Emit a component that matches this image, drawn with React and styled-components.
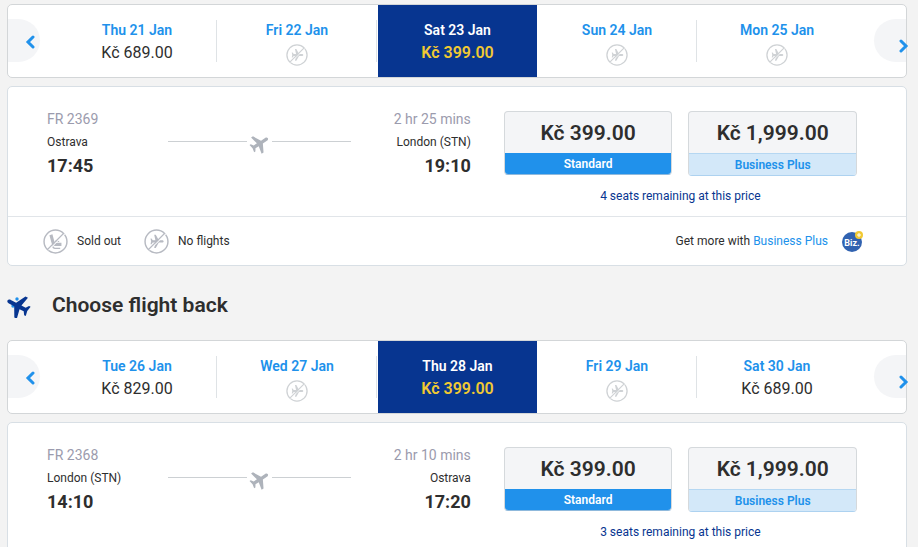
import React, { useState } from "react";
import styled, { createGlobalStyle } from "styled-components";

const GlobalStyle = createGlobalStyle`
  * {
    box-sizing: border-box;
  }
  body {
    margin: 0;
    background: #f3f3f3;
    color: #2e2e2e;
    font-family: Roboto, "Liberation Sans", sans-serif;
    font-size: 12px;
    line-height: 16px;
  }
  button {
    font-family: inherit;
    cursor: pointer;
  }
`;

const Page = styled.main`
  padding: 4px 11px 0 7px;
`;

const Card = styled.section`
  background: #fff;
  border: 1px solid ${(props) => (props.$soft ? "#d8dfe5" : "#d3d6d8")};
  border-radius: 5px;
  margin-bottom: 8px;
`;

const DateBar = styled(Card)`
  display: grid;
  grid-template-columns: 49px repeat(5, 1fr) 49px;
  height: 74px;
`;

const Arrow = styled.button`
  display: flex;
  justify-content: flex-end;
  width: 32px;
  height: 43px;
  margin-top: 14px;
  padding: ${(props) => (props.$next ? "20px 0 0" : "16px 5px 0")};
  border: 0;
  border-radius: ${(props) => (props.$next ? "22px 0 0 22px" : "0 22px 22px 0")};
  justify-self: ${(props) => (props.$next ? "end" : "start")};
  background: #f4f5f7;

  svg {
    flex: none;
    margin-right: ${(props) => (props.$next ? "-3px" : "0")};
  }
`;

const Day = styled.button`
  display: flex;
  flex-direction: column;
  align-items: center;
  margin-left: ${(props) => (props.$active ? "1px" : "0")};
  padding: 16px 0 0;
  border: 0;
  background: ${(props) => (props.$active ? "#073590" : "none")};
  background-image: ${(props) =>
    props.$line ? "linear-gradient(#dfe3e6, #dfe3e6)" : "none"};
  background-size: 1px 42px;
  background-position: right 15px;
  background-repeat: ${(props) => (props.$line ? "no-repeat" : "repeat")};
  color: ${(props) => (props.$active ? "#fff" : "#2091eb")};
  font-size: 14px;
  font-weight: 600;
  line-height: 18px;
`;

const DayPrice = styled.span`
  margin-top: 4px;
  color: ${(props) => (props.$active ? "#f1c933" : "#2e2e2e")};
  font-size: 16px;
  font-weight: ${(props) => (props.$active ? 600 : 400)};
  line-height: 20px;
`;

const DayIcon = styled.span`
  height: 22px;
  margin-top: 5px;
`;

const FlightRow = styled.div`
  display: grid;
  grid-template-columns: 6fr 5fr;
  column-gap: 33px;
  padding: 24px 49px 12px 39px;
`;

const Route = styled.div`
  display: grid;
  grid-template-columns: 121px 1fr 120px;
  align-items: start;
`;

const Stop = styled.div`
  display: flex;
  flex-direction: column;
  text-align: ${(props) => (props.$right ? "right" : "left")};
`;

const Muted = styled.span`
  color: #9b9bad;
  font-size: 14px;
  line-height: 16px;
`;

const City = styled.span`
  margin-top: 7px;
`;

const Time = styled.strong`
  margin-top: 6px;
  font-size: 18px;
  font-weight: 700;
  line-height: 20px;
`;

const PlaneLine = styled.div`
  display: flex;
  align-items: center;
  gap: 2px;
  margin-top: 18px;
  color: #aeb3bb;

  &::before,
  &::after {
    content: "";
    flex: 1;
    height: 1px;
    background: #ccd0d3;
  }

  svg {
    overflow: visible;
  }
`;

const Fares = styled.div`
  display: grid;
  grid-template-columns: 1fr 1fr;
  column-gap: 16px;
  align-items: start;
`;

const FareButton = styled.button`
  display: block;
  padding: 0;
  overflow: hidden;
  border: 1px solid #d5d9dc;
  border-bottom-color: ${(props) => (props.$plus ? "#add2f0" : "#8fb9dc")};
  border-radius: 4px;
  background: #f4f5f7;
  color: #2e2e2e;
`;

const FarePrice = styled.span`
  display: block;
  padding-top: 1px;
  font-size: 21px;
  font-weight: 600;
  line-height: 40px;
`;

const FareName = styled.span`
  display: block;
  padding-top: 1px;
  border-top: ${(props) => (props.$plus ? "1px solid #b5d7f2" : "0")};
  background: ${(props) => (props.$plus ? "#d3e8f9" : "#2091eb")};
  color: ${(props) => (props.$plus ? "#2091eb" : "#fff")};
  font-size: 12px;
  font-weight: 600;
  line-height: 20px;
`;

const Seats = styled.p`
  grid-column: 1 / -1;
  margin: 12px 0 0;
  color: #073590;
  text-align: center;
`;

const Legend = styled.footer`
  display: flex;
  align-items: center;
  height: 49px;
  padding: 0 43px 0 35px;
  border-top: 1px solid #e1e5e9;
`;

const LegendItem = styled.span`
  display: flex;
  align-items: center;
  gap: 9px;
  margin-right: 23px;
`;

const More = styled.span`
  display: flex;
  align-items: center;
  gap: 14px;
  margin-left: auto;

  a {
    color: #2091eb;
    text-decoration: none;
  }
`;

const Heading = styled.h2`
  display: flex;
  align-items: center;
  gap: 20px;
  margin: 26px 0 22px;
  font-size: 21px;
  font-weight: 600;
  line-height: 26px;
`;

const Chevron = ({ next }) => (
  <svg width="10" height="14" viewBox="0 0 10 14" aria-hidden="true">
    <path
      d={next ? "M2 2l5 5-5 5" : "M8 2L3 7l5 5"}
      fill="none"
      stroke="#2091eb"
      strokeWidth="3"
      strokeLinecap="round"
    />
  </svg>
);

// plane in a 24x24 box, nose to the right
const planePath =
  "M23 12c0 1.100-1.200 1.900-2.500 1.900H15L10 23H7.400l2-9.100H5L3 16.800H1.300L2.300 12 1.300 7.200H3l2 2.900h4.400L7.400 1H10l5 9.100h5.500c1.300 0 2.500.8 2.500 1.900z";

const NoFlightIcon = ({ size, color }) => (
  <svg width={size} height={size} viewBox="0 0 24 24" fill="none" aria-hidden="true">
    <circle cx="12" cy="12" r="11" stroke={color} strokeWidth="1.4" />
    <path d={planePath} fill={color} transform="translate(5.5 5) scale(.58)" />
    <path d="M5.200 20.300L20.800 4.700" stroke="#fff" strokeWidth="1" />
    <path d="M4.200 19.800L19.800 4.200" stroke={color} strokeWidth="1.300" />
  </svg>
);

const SoldOutIcon = ({ size, color }) => (
  <svg width={size} height={size} viewBox="0 0 24 24" fill="none" aria-hidden="true">
    <circle cx="12" cy="12" r="11" stroke={color} strokeWidth="1.4" />
    <path d="M7.600 5.500l2 7.300c.3 1.200 1 2 2.200 2h5.900" stroke={color} strokeWidth="3" />
    <path d="M11.500 11.800h4M9 15.500c.2 1.700 1 3 2.500 3h5" stroke={color} strokeWidth="1.200" />
    <path d="M5.200 20.300L20.800 4.700" stroke="#fff" strokeWidth="1" />
    <path d="M4.200 19.800L19.800 4.200" stroke={color} strokeWidth="1.300" />
  </svg>
);

const RoutePlane = () => (
  <svg width="21" height="24" viewBox="0 0 21 24" aria-hidden="true">
    <path
      d={planePath}
      fill="currentColor"
      transform="translate(10 15) rotate(-33) scale(.88) translate(-11 -12)"
    />
  </svg>
);

const BackPlane = () => (
  <svg width="25" height="26" viewBox="0 0 25 26" aria-hidden="true">
    <g fill="#2091eb">
      <circle cx="10" cy="7" r="1.700" />
      <circle cx="6" cy="14" r="1.700" />
    </g>
    <path
      d={planePath}
      fill="#073590"
      transform="translate(11 14) rotate(208) scale(1.080) translate(-12 -12)"
    />
  </svg>
);

const BizIcon = () => (
  <svg width="21" height="22" viewBox="0 0 21 22" aria-hidden="true">
    <circle cx="10" cy="12" r="10" fill="#3162b0" />
    <text
      x="10"
      y="16"
      textAnchor="middle"
      fill="#fff"
      fontFamily="'Liberation Sans Narrow', Roboto, sans-serif"
      fontSize="9"
      fontWeight="700"
    >
      Biz.
    </text>
    <circle cx="17" cy="5" r="4" fill="#f1c933" />
    <path d="M17 3v4M15 5h4" stroke="#fff" strokeWidth="1" />
  </svg>
);

const outDays = [
  { date: "Thu 21 Jan", price: "Kč 689.00" },
  { date: "Fri 22 Jan" },
  { date: "Sat 23 Jan", price: "Kč 399.00" },
  { date: "Sun 24 Jan" },
  { date: "Mon 25 Jan" },
];

const backDays = [
  { date: "Tue 26 Jan", price: "Kč 829.00" },
  { date: "Wed 27 Jan" },
  { date: "Thu 28 Jan", price: "Kč 399.00" },
  { date: "Fri 29 Jan" },
  { date: "Sat 30 Jan", price: "Kč 689.00" },
];

const DatePicker = ({ days }) => {
  const [active, setActive] = useState(2);
  return (
    <DateBar>
      <Arrow aria-label="Previous days">
        <Chevron />
      </Arrow>
      {days.map((day, index) => (
        <Day
          key={day.date}
          $active={index === active}
          $line={index !== active && index < days.length - 1}
          onClick={() => day.price && setActive(index)}
        >
          {day.date}
          {day.price ? (
            <DayPrice $active={index === active}>{day.price}</DayPrice>
          ) : (
            <DayIcon>
              <NoFlightIcon size={22} color="#cfd2d5" />
            </DayIcon>
          )}
        </Day>
      ))}
      <Arrow $next aria-label="Next days">
        <Chevron next />
      </Arrow>
    </DateBar>
  );
};

const Flight = ({ number, duration, from, to, departs, arrives, seats, children }) => (
  <Card $soft>
    <FlightRow>
      <Route>
        <Stop>
          <Muted>{number}</Muted>
          <City>{from}</City>
          <Time>{departs}</Time>
        </Stop>
        <PlaneLine>
          <RoutePlane />
        </PlaneLine>
        <Stop $right>
          <Muted>{duration}</Muted>
          <City>{to}</City>
          <Time>{arrives}</Time>
        </Stop>
      </Route>
      <Fares>
        <FareButton>
          <FarePrice>Kč 399.00</FarePrice>
          <FareName>Standard</FareName>
        </FareButton>
        <FareButton $plus>
          <FarePrice>Kč 1,999.00</FarePrice>
          <FareName $plus>Business Plus</FareName>
        </FareButton>
        <Seats>{seats} seats remaining at this price</Seats>
      </Fares>
    </FlightRow>
    {children}
  </Card>
);

export default function App() {
  return (
    <>
      <GlobalStyle />
      <Page>
        <DatePicker days={outDays} />
        <Flight
          number="FR 2369"
          duration="2 hr 25 mins"
          from="Ostrava"
          to="London (STN)"
          departs="17:45"
          arrives="19:10"
          seats={4}
        >
          <Legend>
            <LegendItem>
              <SoldOutIcon size={25} color="#b7bac2" />
              Sold out
            </LegendItem>
            <LegendItem>
              <NoFlightIcon size={25} color="#b7bac2" />
              No flights
            </LegendItem>
            <More>
              <span>
                Get more with <a href="#business-plus">Business Plus</a>
              </span>
              <BizIcon />
            </More>
          </Legend>
        </Flight>
        <Heading>
          <BackPlane />
          Choose flight back
        </Heading>
        <DatePicker days={backDays} />
        <Flight
          number="FR 2368"
          duration="2 hr 10 mins"
          from="London (STN)"
          to="Ostrava"
          departs="14:10"
          arrives="17:20"
          seats={3}
        />
      </Page>
    </>
  );
}
